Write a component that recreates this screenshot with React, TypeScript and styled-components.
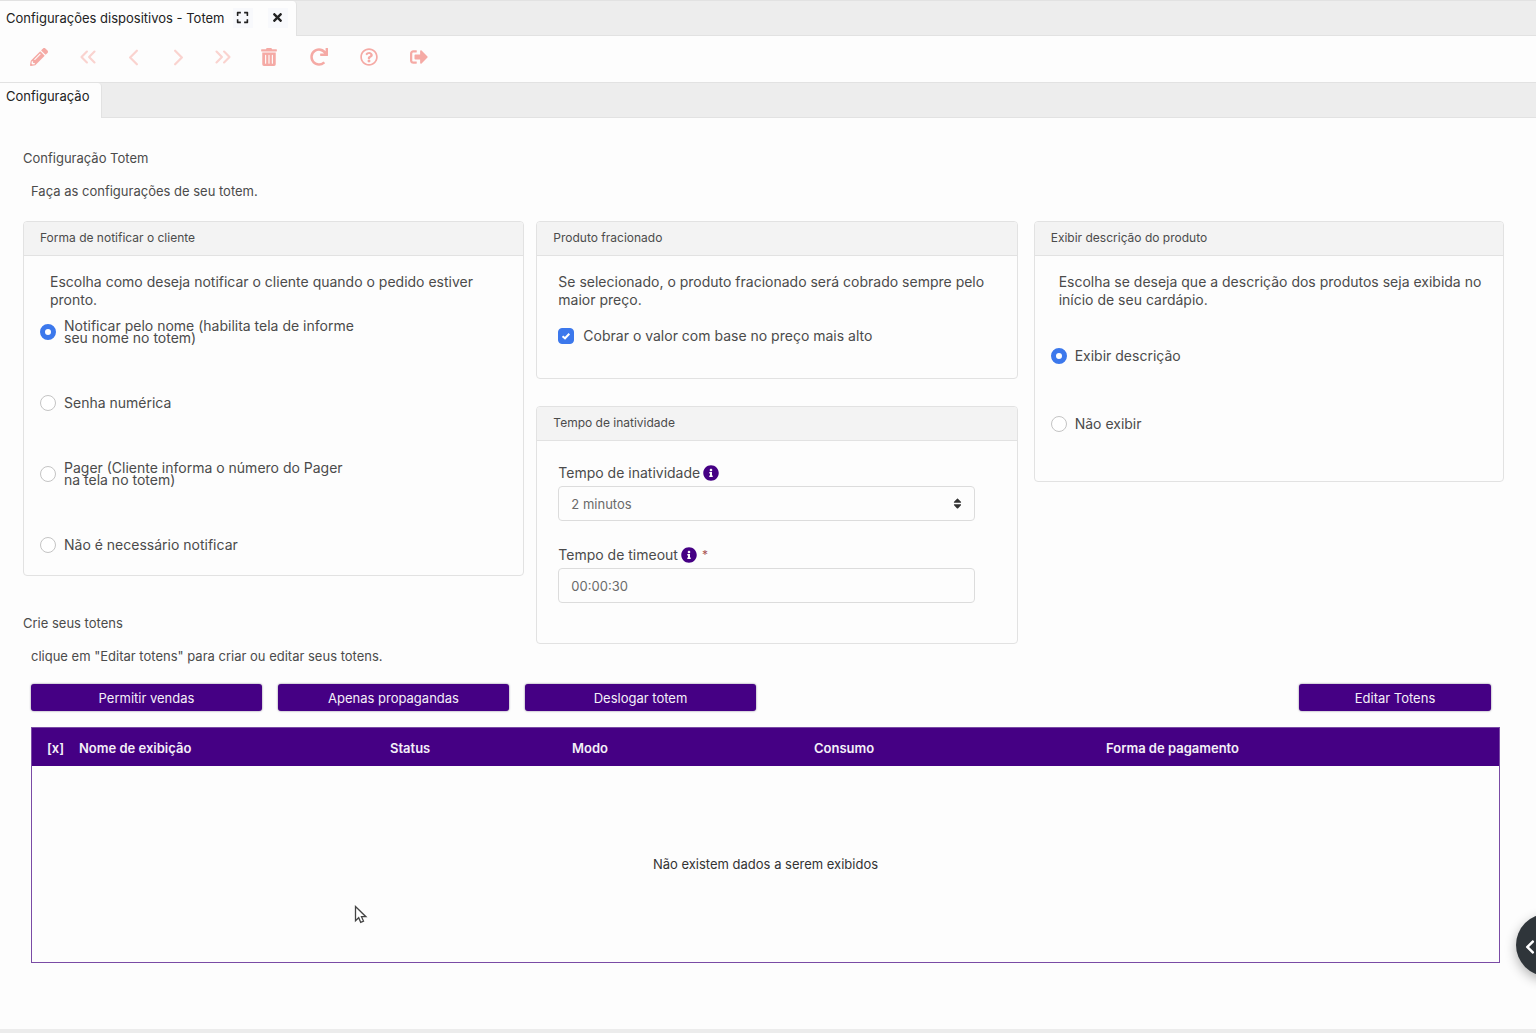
import React, { useState } from "react";
import styled, { createGlobalStyle } from "styled-components";
import {
  FaChevronLeft,
  FaExpand,
  FaInfoCircle,
  FaPencilAlt,
  FaRedo,
  FaRegQuestionCircle,
  FaSignOutAlt,
  FaSort,
  FaTimes,
  FaTrashAlt,
} from "react-icons/fa";
import { ChevronLeft, ChevronRight, ChevronsLeft, ChevronsRight } from "lucide-react";

const purple = "#450084";
const line = "#e2e2e2";
const ink = "#4b4b4b";

const GlobalStyle = createGlobalStyle`
  * { box-sizing: border-box; }
  body {
    margin: 0;
    background: #fdfdfd;
    color: ${ink};
    font: 13px/18px Inter, "Open Sans", sans-serif;
  }
  button, input, select { font: inherit; color: inherit; }
  h1, h2, p { margin: 0; font-size: 13px; font-weight: 400; }
`;

const Page = styled.div`
  min-height: 100vh;
  display: flex;
  flex-direction: column;
`;

const TabBar = styled.div`
  display: flex;
  height: 36px;
  background: #ededed;
  border-top: 1px solid ${line};
  border-bottom: 1px solid ${line};
`;

const Tab = styled.div`
  display: flex;
  align-items: center;
  height: 35px;
  padding: 0 8px 2px 6px;
  background: #fdfdfd;
  border-right: 1px solid ${line};
  border-top-right-radius: 4px;
  color: #222;
  white-space: nowrap;
`;

const InnerTab = styled(Tab)`
  padding: 0 12px 10px 6px;
`;

const TabButton = styled.button`
  display: grid;
  place-items: center;
  width: 20px;
  height: 20px;
  margin-left: 8px;
  padding: 0;
  border: 0;
  background: #f8f9fc;
  color: #222;

  & + & { margin-left: 15px; }
`;

const Toolbar = styled.div`
  display: flex;
  align-items: center;
  height: 46px;
  padding: 0 25px 4px;
  gap: 23px;
`;

const ToolButton = styled.button<{ $faded?: boolean }>`
  display: grid;
  place-items: center;
  width: ${(p) => (p.$faded ? 22 : 27)}px;
  height: 28px;
  padding: 0;
  border: 0;
  background: none;
  color: ${(p) => (p.$faded ? "#fad3cf" : "#f5aaa5")};
`;

const Content = styled.main`
  flex: 1;
  padding: 31px 32px 60px 23px;
`;

const Hint = styled.p`
  margin: 15px 0 0 8px;
`;

const Columns = styled.div`
  display: grid;
  grid-template-columns: 501fr 481fr 474fr;
  gap: 12px;
  align-items: start;
  margin-top: 21px;
`;

const Column = styled.div<{ $inset?: boolean }>`
  padding-left: ${(p) => (p.$inset ? 4 : 0)}px;
`;

const Card = styled.section`
  border: 1px solid ${line};
  border-radius: 4px;
  overflow: hidden;

  & + & { margin-top: 27px; }
`;

const CardTitle = styled.h2`
  padding: 7px 16px 8px;
  background: #f3f3f3;
  border-bottom: 1px solid ${line};
  font-size: 12px;
`;

const CardBody = styled.div<{ $bottom: number; $side?: number }>`
  padding: 17px ${(p) => p.$side ?? 16}px ${(p) => p.$bottom}px;
  font-size: 14px;
`;

const Lead = styled.p<{ $indent?: number }>`
  margin-left: ${(p) => p.$indent ?? 0}px;
  font-size: 14px;
`;

const Options = styled.div<{ $gap: number; $top: number }>`
  display: flex;
  flex-direction: column;
  gap: ${(p) => p.$gap}px;
  padding-top: ${(p) => p.$top}px;
`;

const Option = styled.label`
  display: flex;
  align-items: center;
  min-height: 24px;
  gap: 8px;
  max-width: 318px;
  line-height: 12px;
`;

const Radio = styled.input.attrs({ type: "radio" })`
  appearance: none;
  flex: none;
  width: 16px;
  height: 16px;
  margin: 0;
  border: 1px solid #c4c4c4;
  border-radius: 50%;
  background: #fff;

  &:checked { border: 5px solid #3c78ec; }
`;

const CheckLine = styled.label`
  display: flex;
  align-items: center;
  gap: 9px;
  margin-top: 18px;
`;

const CheckBox = styled.span`
  display: grid;
  width: 16px;
  height: 16px;

  & > * { grid-area: 1 / 1; }
  svg { place-self: center; pointer-events: none; }
`;

const Check = styled.input.attrs({ type: "checkbox" })`
  appearance: none;
  width: 16px;
  height: 16px;
  margin: 0;
  border: 1px solid #c4c4c4;
  border-radius: 4px;

  &:checked { border-color: #3c78ec; background: #3c78ec; }
`;

const Fields = styled.div`
  padding: 6px 21px 0 0;
`;

const Field = styled.div`
  & + & { margin-top: 25px; }
`;

const FieldLabel = styled.label`
  display: flex;
  align-items: center;
  gap: 3px;
  height: 18px;
  margin-bottom: 4px;

  svg { color: ${purple}; }
`;

const Required = styled.span`
  margin-left: 2px;
  color: #a55;
  font-size: 12px;
`;

const Control = styled.div`
  display: grid;
  align-items: center;
  color: #6a6a6a;
  font-size: 13px;

  & > * { grid-area: 1 / 1; }
  & > svg { justify-self: end; margin-right: 11px; color: #333; pointer-events: none; }
`;

const Select = styled.select`
  appearance: none;
  width: 100%;
  height: 35px;
  padding: 0 12px;
  border: 1px solid #dcdcdc;
  border-radius: 4px;
  background: #fdfdfd;
`;

const TextBox = styled.input`
  width: 100%;
  height: 35px;
  padding: 0 12px;
  border: 1px solid #dcdcdc;
  border-radius: 4px;
  background: #fdfdfd;
`;

const Subsection = styled.div`
  padding-top: 38px;
`;

const Totems = styled.div`
  padding: 19px 4px 0 8px;
`;

const Actions = styled.div`
  display: flex;
  gap: 16px;
  padding-right: 9px;
  margin-bottom: 16px;
`;

const Action = styled.button<{ $width: number; $end?: boolean }>`
  width: ${(p) => p.$width}px;
  height: 27px;
  margin-left: ${(p) => (p.$end ? "auto" : 0)};
  padding: 0;
  border: 0;
  border-radius: 3px;
  background: ${purple};
  box-shadow: 0 0 2px rgba(30, 0, 60, 0.6);
  color: #f4f0f8;
`;

const Table = styled.table`
  width: 100%;
  table-layout: fixed;
  border-collapse: separate;
  border-spacing: 0;
  border: 1px solid #7a4ba5;
`;

const Head = styled.th<{ $width?: number }>`
  width: ${(p) => (p.$width ? `${p.$width}px` : "auto")};
  height: 38px;
  padding: 1px 8px 0;
  background: ${purple};
  color: #f4f0f8;
  font-weight: 600;
  text-align: left;

  &:first-child { padding: 1px 0 0 15px; }
`;

const Empty = styled.td`
  height: 196px;
  padding: 0;
  color: #333;
  text-align: center;
`;

const BottomStrip = styled.footer`
  height: 4px;
  background: #ececec;
`;

const Drawer = styled.button`
  position: fixed;
  right: -42px;
  bottom: 57px;
  display: flex;
  align-items: center;
  width: 62px;
  height: 62px;
  padding: 3px 0 0 6px;
  border: 0;
  border-radius: 50%;
  background: #2f353a;
  box-shadow: 0 4px 12px rgba(0, 0, 0, 0.3);
  color: #fff;
`;

const Pointer = styled.svg`
  position: absolute;
  left: 354px;
  top: 905px;
  pointer-events: none;
`;

const notifyOptions = [
  "Notificar pelo nome (habilita tela de informe seu nome no totem)",
  "Senha numérica",
  "Pager (Cliente informa o número do Pager na tela no totem)",
  "Não é necessário notificar",
];

const displayOptions = ["Exibir descrição", "Não exibir"];

const headings = [
  { text: "[x]", width: 39 },
  { text: "Nome de exibição", width: 311 },
  { text: "Status", width: 182 },
  { text: "Modo", width: 242 },
  { text: "Consumo", width: 292 },
  { text: "Forma de pagamento" },
];

function RadioList(props: { name: string; items: string[]; gap: number; top: number }) {
  const [picked, setPicked] = useState(0);
  return (
    <Options $gap={props.gap} $top={props.top} role="radiogroup">
      {props.items.map((item, i) => (
        <Option key={item}>
          <Radio name={props.name} checked={picked === i} onChange={() => setPicked(i)} />
          <span>{item}</span>
        </Option>
      ))}
    </Options>
  );
}

function IdleFields() {
  return (
    <Fields>
      <Field>
        <FieldLabel htmlFor="idle">
          Tempo de inatividade <FaInfoCircle size={16} />
        </FieldLabel>
        <Control>
          <Select id="idle" defaultValue="2">
            <option value="2">2 minutos</option>
          </Select>
          <FaSort size={13} />
        </Control>
      </Field>
      <Field>
        <FieldLabel htmlFor="timeout">
          Tempo de timeout <FaInfoCircle size={16} />
          <Required>*</Required>
        </FieldLabel>
        <Control>
          <TextBox id="timeout" defaultValue="00:00:30" />
        </Control>
      </Field>
    </Fields>
  );
}

export default function App() {
  return (
    <Page>
      <GlobalStyle />
      <TabBar>
        <Tab>
          Configurações dispositivos - Totem
          <TabButton aria-label="Expandir"><FaExpand size={13} /></TabButton>
          <TabButton aria-label="Fechar"><FaTimes size={13} /></TabButton>
        </Tab>
      </TabBar>
      <Toolbar>
        <ToolButton aria-label="Editar"><FaPencilAlt size={18} /></ToolButton>
        <ToolButton $faded aria-label="Primeiro"><ChevronsLeft size={26} /></ToolButton>
        <ToolButton $faded aria-label="Anterior"><ChevronLeft size={27} /></ToolButton>
        <ToolButton $faded aria-label="Próximo"><ChevronRight size={27} /></ToolButton>
        <ToolButton $faded aria-label="Último"><ChevronsRight size={26} /></ToolButton>
        <ToolButton aria-label="Excluir"><FaTrashAlt size={18} /></ToolButton>
        <ToolButton aria-label="Atualizar"><FaRedo size={18} /></ToolButton>
        <ToolButton aria-label="Ajuda"><FaRegQuestionCircle size={18} /></ToolButton>
        <ToolButton aria-label="Sair"><FaSignOutAlt size={18} /></ToolButton>
      </Toolbar>
      <TabBar>
        <InnerTab>Configuração</InnerTab>
      </TabBar>

      <Content>
        <h1>Configuração Totem</h1>
        <Hint>Faça as configurações de seu totem.</Hint>

        <Columns>
          <Column>
            <Card>
              <CardTitle>Forma de notificar o cliente</CardTitle>
              <CardBody $bottom={18}>
                <Lead $indent={10}>
                  Escolha como deseja notificar o cliente quando o pedido estiver pronto.
                </Lead>
                <RadioList name="notify" items={notifyOptions} gap={47} top={11} />
              </CardBody>
            </Card>
            <Subsection>
              <h1>Crie seus totens</h1>
              <Hint>clique em "Editar totens" para criar ou editar seus totens.</Hint>
            </Subsection>
          </Column>

          <Column>
            <Card>
              <CardTitle>Produto fracionado</CardTitle>
              <CardBody $bottom={33} $side={21}>
                <Lead>
                  Se selecionado, o produto fracionado será cobrado sempre pelo maior preço.
                </Lead>
                <CheckLine>
                  <CheckBox>
                    <Check defaultChecked />
                    <svg width="10" height="10" viewBox="0 0 10 10" fill="none" stroke="#fff" strokeWidth="2">
                      <path d="M1.5 5.2 4 7.3 8.3 2.8" />
                    </svg>
                  </CheckBox>
                  Cobrar o valor com base no preço mais alto
                </CheckLine>
              </CardBody>
            </Card>
            <Card>
              <CardTitle>Tempo de inatividade</CardTitle>
              <CardBody $bottom={40} $side={21}>
                <IdleFields />
              </CardBody>
            </Card>
          </Column>

          <Column $inset>
            <Card>
              <CardTitle>Exibir descrição do produto</CardTitle>
              <CardBody $bottom={45}>
                <Lead $indent={8}>
                  Escolha se deseja que a descrição dos produtos seja exibida no início de seu cardápio.
                </Lead>
                <RadioList name="display" items={displayOptions} gap={44} top={35} />
              </CardBody>
            </Card>
          </Column>
        </Columns>

        <Totems>
          <Actions>
            <Action $width={231}>Permitir vendas</Action>
            <Action $width={231}>Apenas propagandas</Action>
            <Action $width={231}>Deslogar totem</Action>
            <Action $width={192} $end>Editar Totens</Action>
          </Actions>
          <Table>
            <thead>
              <tr>
                {headings.map((h) => (
                  <Head key={h.text} $width={h.width} scope="col">{h.text}</Head>
                ))}
              </tr>
            </thead>
            <tbody>
              <tr>
                <Empty colSpan={headings.length}>Não existem dados a serem exibidos</Empty>
              </tr>
            </tbody>
          </Table>
        </Totems>
      </Content>
      <BottomStrip />

      <Drawer aria-label="Abrir painel"><FaChevronLeft size={16} /></Drawer>
      <Pointer width="14" height="20" viewBox="0 0 14 20" aria-hidden="true">
        <path
          d="M1.5 1.5v14.2l3.2-3 2 4.6 2.8-1.2-2-4.4h4.4z"
          fill="#fff"
          stroke="#444"
          strokeWidth="1.3"
        />
      </Pointer>
    </Page>
  );
}
